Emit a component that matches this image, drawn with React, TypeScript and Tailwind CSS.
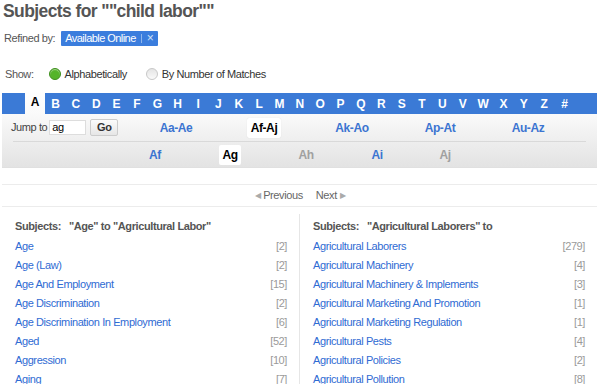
import React from "react";

const letters = "ABCDEFGHIJKLMNOPQRSTUVWXYZ#".split("");

const ranges = [
  { label: "Aa-Ae", active: false },
  { label: "Af-Aj", active: true },
  { label: "Ak-Ao", active: false },
  { label: "Ap-At", active: false },
  { label: "Au-Az", active: false },
];

const subRanges = [
  { label: "Af", w: "w-[74px]", kind: "link" },
  { label: "Ag", w: "w-[76px]", kind: "active" },
  { label: "Ah", w: "w-[76px]", kind: "off" },
  { label: "Ai", w: "w-[66px]", kind: "link" },
  { label: "Aj", w: "w-[70px]", kind: "off" },
];

const leftItems: [string, string][] = [
  ["Age", "2"],
  ["Age (Law)", "2"],
  ["Age And Employment", "15"],
  ["Age Discrimination", "2"],
  ["Age Discrimination In Employment", "6"],
  ["Aged", "52"],
  ["Aggression", "10"],
  ["Aging", "7"],
];

const rightItems: [string, string][] = [
  ["Agricultural Laborers", "279"],
  ["Agricultural Machinery", "4"],
  ["Agricultural Machinery & Implements", "3"],
  ["Agricultural Marketing And Promotion", "1"],
  ["Agricultural Marketing Regulation", "1"],
  ["Agricultural Pests", "4"],
  ["Agricultural Policies", "2"],
  ["Agricultural Pollution", "8"],
];

const SubjectColumn: React.FC<{ title: string; items: [string, string][]; className: string }> = ({
  title,
  items,
  className,
}) => {
  return (
    <div className={className}>
      <div className="h-[19px] flex items-center font-bold text-[#555] whitespace-pre">{title}</div>
      <div className="mt-[1px]">
        {items.map(([name, count]) => (
          <div key={name} className="h-[19px] flex items-center justify-between">
            <span className="text-[#2f6bd3]">{name}</span>
            <span className="text-[#9a9a9a]">[{count}]</span>
          </div>
        ))}
      </div>
    </div>
  );
};

const App: React.FC = () => {
  return (
    <div className="w-[600px] h-[384px] overflow-hidden bg-white text-[11px] tracking-[-0.4px] text-[#444] font-['Liberation_Sans',Arial,sans-serif]">
      <h1 className="pl-[3px] h-[22px] text-[17.5px] leading-[22px] tracking-[-0.6px] font-bold text-[#555]">
        Subjects for ""child labor""
      </h1>

      <div className="mt-[8px] pl-[4px] h-[16px] flex items-center">
        <span className="text-[#555]">Refined by:</span>
        <span className="ml-[6px] h-[15px] flex items-center bg-[#3b7ddd] text-white rounded-[1px] pl-[4px] pr-[5px] tracking-[-0.55px]">
          Available Online
          <span className="mx-[5px] w-px h-[9px] bg-[#8fb6ec]" />
          <span className="text-[#cfe0f7] text-[12px] leading-none">×</span>
        </span>
      </div>

      <div className="mt-[20px] pl-[5px] h-[16px] flex items-center">
        <span className="text-[#555]">Show:</span>
        <span className="ml-[15px] w-[12px] h-[12px] rounded-full bg-[#55b42a] border border-[#3f8f1e] shadow-[inset_0_1px_1px_rgba(255,255,255,0.5)]" />
        <span className="ml-[4px] text-[#333]">Alphabetically</span>
        <span className="ml-[19px] w-[12px] h-[12px] rounded-full bg-gradient-to-b from-[#e4e4e4] to-[#fafafa] border border-[#c8c8c8]" />
        <span className="ml-[4px] text-[#333]">By Number of Matches</span>
      </div>

      <div className="mt-[11px] mx-[2px] w-[595px]">
        <div className="relative h-[21px] bg-[#3b7ad6] flex items-center pl-[23px] tracking-normal">
          {letters.map((l) => (
            <span
              key={l}
              className={
                l === "A"
                  ? "w-[20.36px] -mt-[3px] h-[24px] flex items-center justify-center bg-gradient-to-b from-white to-[#fafafa] text-black font-bold text-[12px]"
                  : "w-[20.36px] flex items-center justify-center text-white font-bold text-[12px]"
              }
            >
              {l}
            </span>
          ))}
        </div>

        <div className="h-[54px] bg-gradient-to-b from-[#fafafa] to-[#e3e3e3] border-b border-[#e0e0e0]">
          <div className="h-[27px] flex items-center">
            <div className="w-[130px] flex items-center pl-[9px]">
              <span className="text-[#444]">Jump to</span>
              <span className="ml-[2px] w-[37px] h-[15px] bg-white border border-[#ddd] flex items-center pl-[2px] text-black">
                ag
              </span>
              <span className="ml-[4px] w-[28px] h-[17px] rounded-[2px] border border-[#ccc] bg-gradient-to-b from-[#fbfbfb] to-[#e6e6e6] flex items-center justify-center font-bold text-[#333]">
                Go
              </span>
            </div>
            {ranges.map((r) => (
              <div key={r.label} className="w-[88px] flex justify-center">
                {r.active ? (
                  <span className="px-[4px] h-[20px] flex items-center bg-white rounded-[2px] font-bold text-black text-[12px] shadow-[0_0_1px_rgba(0,0,0,0.15)]">
                    {r.label}
                  </span>
                ) : (
                  <span className="font-bold text-[#3b74d1] text-[12px]">{r.label}</span>
                )}
              </div>
            ))}
          </div>
          <div className="mx-[11px] h-px bg-[#d9d9d9]" />
          <div className="h-[26px] flex items-center pl-[116px]">
            {subRanges.map((s) => (
              <div key={s.label} className={`${s.w} flex justify-center`}>
                {s.kind === "active" ? (
                  <span className="w-[22px] h-[20px] flex items-center justify-center bg-white rounded-[2px] font-bold text-black text-[12px]">
                    {s.label}
                  </span>
                ) : s.kind === "link" ? (
                  <span className="font-bold text-[#3b74d1] text-[12px]">{s.label}</span>
                ) : (
                  <span className="font-bold text-[#a0a0a0] text-[12px]">{s.label}</span>
                )}
              </div>
            ))}
          </div>
        </div>
      </div>

      <div className="mt-[16px] mx-[2px] w-[595px] h-px bg-[#ececec]" />
      <div className="h-[21px] flex items-center justify-center text-[#666] text-[11px]">
        <span className="text-[#aaa] text-[8px] mr-[3px]">◀</span>
        <span>Previous</span>
        <span className="ml-[13px]">Next</span>
        <span className="text-[#aaa] text-[8px] ml-[3px]">▶</span>
      </div>
      <div className="mx-[2px] w-[595px] h-px bg-[#ececec]" />

      <div className="mx-[2px] w-[595px] flex">
        <SubjectColumn
          title={'Subjects:   "Age" to "Agricultural Labor"'}
          items={leftItems}
          className="w-[298px] pl-[13px] pr-[12px] mt-[7px] pt-[3px] border-r border-[#e6e6e6]"
        />
        <SubjectColumn
          title={'Subjects:   "Agricultural Laborers" to'}
          items={rightItems}
          className="w-[297px] pl-[13px] pr-[12px] mt-[7px] pt-[3px]"
        />
      </div>
    </div>
  );
};

export default App;
